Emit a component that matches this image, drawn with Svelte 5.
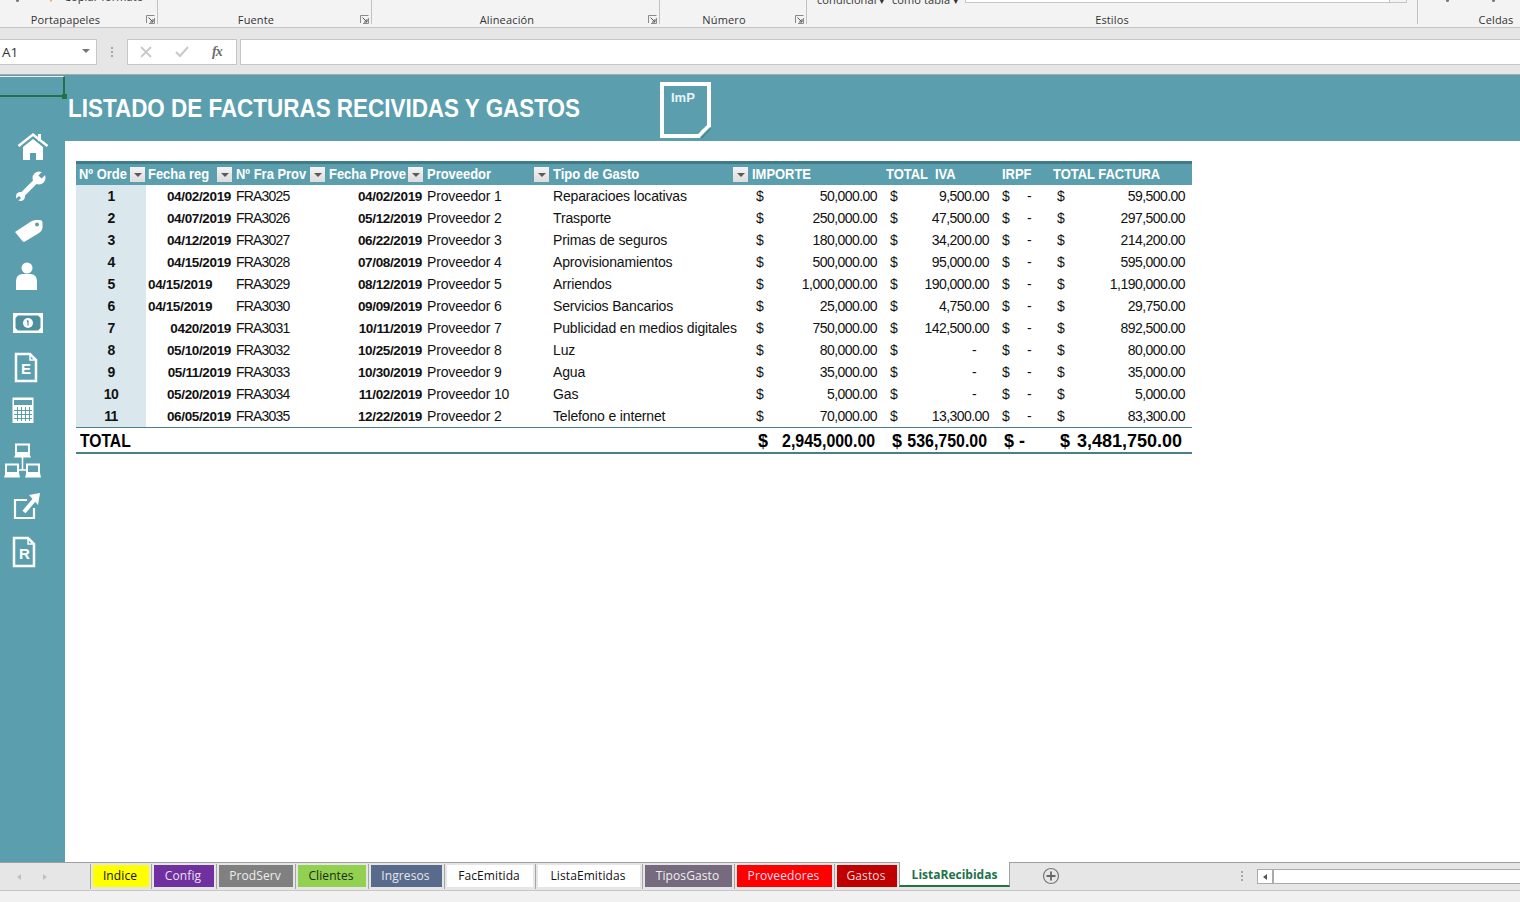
<script>
  const groups = [
    { name: 'Portapapeles', cls: 'g-clip', launcher: true },
    { name: 'Fuente', cls: 'g-font', launcher: true },
    { name: 'Alineación', cls: 'g-align', launcher: true },
    { name: 'Número', cls: 'g-num', launcher: true },
    { name: 'Estilos', cls: 'g-style', launcher: false },
    { name: 'Celdas', cls: 'g-cells', launcher: false },
  ]

  const rows = [
    [1, '04/02/2019', 'FRA3025', '04/02/2019', 'Proveedor 1', 'Reparacioes locativas', '50,000.00', '9,500.00', '59,500.00'],
    [2, '04/07/2019', 'FRA3026', '05/12/2019', 'Proveedor 2', 'Trasporte', '250,000.00', '47,500.00', '297,500.00'],
    [3, '04/12/2019', 'FRA3027', '06/22/2019', 'Proveedor 3', 'Primas de seguros', '180,000.00', '34,200.00', '214,200.00'],
    [4, '04/15/2019', 'FRA3028', '07/08/2019', 'Proveedor 4', 'Aprovisionamientos', '500,000.00', '95,000.00', '595,000.00'],
    [5, '04/15/2019', 'FRA3029', '08/12/2019', 'Proveedor 5', 'Arriendos', '1,000,000.00', '190,000.00', '1,190,000.00'],
    [6, '04/15/2019', 'FRA3030', '09/09/2019', 'Proveedor 6', 'Servicios Bancarios', '25,000.00', '4,750.00', '29,750.00'],
    [7, '0420/2019', 'FRA3031', '10/11/2019', 'Proveedor 7', 'Publicidad en medios digitales', '750,000.00', '142,500.00', '892,500.00'],
    [8, '05/10/2019', 'FRA3032', '10/25/2019', 'Proveedor 8', 'Luz', '80,000.00', '-', '80,000.00'],
    [9, '05/11/2019', 'FRA3033', '10/30/2019', 'Proveedor 9', 'Agua', '35,000.00', '-', '35,000.00'],
    [10, '05/20/2019', 'FRA3034', '11/02/2019', 'Proveedor 10', 'Gas', '5,000.00', '-', '5,000.00'],
    [11, '06/05/2019', 'FRA3035', '12/22/2019', 'Proveedor 2', 'Telefono e internet', '70,000.00', '13,300.00', '83,300.00'],
  ]

  const headers = [
    { label: 'Nº Orde', filter: true },
    { label: 'Fecha reg', filter: true },
    { label: 'Nº Fra Prov', filter: true },
    { label: 'Fecha Prove', filter: true },
    { label: 'Proveedor', filter: true },
    { label: 'Tipo de Gasto', filter: true },
    { label: 'IMPORTE', filter: false },
    { label: 'TOTAL  IVA', filter: false },
    { label: 'IRPF', filter: false },
    { label: 'TOTAL FACTURA', filter: false },
  ]

  const widths = [70, 88, 93, 98, 126, 199, 134, 116, 51, 141]

  const tabs = [
    { name: 'Indice', w: 56, bg: '#ffff00', fg: '#111' },
    { name: 'Config', w: 60, bg: '#7030a0', fg: '#e8e0f0' },
    { name: 'ProdServ', w: 74, bg: '#808080', fg: '#eee' },
    { name: 'Clientes', w: 68, bg: '#92d050', fg: '#1c2c10' },
    { name: 'Ingresos', w: 71, bg: '#596b8c', fg: '#e4e8f0' },
    { name: 'FacEmitida', w: 86, bg: '#ffffff', fg: '#111' },
    { name: 'ListaEmitidas', w: 102, bg: '#ffffff', fg: '#111' },
    { name: 'TiposGasto', w: 87, bg: '#766a7e', fg: '#eee' },
    { name: 'Proveedores', w: 95, bg: '#ff0000', fg: '#fde' },
    { name: 'Gastos', w: 60, bg: '#c00000', fg: '#f6dada' },
  ]
</script>

<div class="window">
  <div class="ribbon">
    {#each groups as g}
      <div class="group {g.cls}">
        <div class="cut">
          {#if g.cls === 'g-clip'}
            <span class="caret-small first"></span>
            <svg class="brush" width="10" height="8" viewBox="0 0 10 8"><path d="M2 0h6L6 6 5 7 4 6z" fill="#e9b671" /></svg>
            <span class="cut-text">Copiar formato</span>
          {:else if g.cls === 'g-style'}
            <span class="cut-text cond">condicional ▾</span>
            <span class="cut-text tabla">como tabla ▾</span>
            <span class="style-box"><i></i></span>
          {:else if g.cls === 'g-cells'}
            <span class="caret-small c1"></span>
            <span class="caret-small c2"></span>
          {/if}
        </div>
        <div class="label">{g.name}</div>
        {#if g.launcher}
          <svg class="launcher" width="9" height="9" viewBox="0 0 9 9">
            <path d="M.5 8V.5H8.5M8.5 3v5.500H3" fill="none" stroke="#8a8a8a" />
            <path d="M2.500 2.500L7 7M7 4v3H4" fill="none" stroke="#555" />
          </svg>
        {/if}
      </div>
    {/each}
  </div>

  <div class="formula">
    <div class="namebox">
      <span>A1</span>
      <i class="tri"></i>
    </div>
    <div class="dots"><b></b><b></b><b></b></div>
    <div class="fx-buttons">
      <svg width="12" height="12" viewBox="0 0 12 12"><path d="M1 1l10 10M11 1L1 11" stroke="#c8c8c8" stroke-width="1.800" /></svg>
      <svg width="14" height="12" viewBox="0 0 14 12"><path d="M1 6l4 4 8-9" fill="none" stroke="#c8c8c8" stroke-width="2" /></svg>
      <span class="fx">fx</span>
    </div>
    <div class="input"></div>
  </div>

  <div class="sheet">
    <div class="selected"><i></i></div>

    <header class="banner">
      <h1>LISTADO DE FACTURAS RECIVIDAS Y GASTOS</h1>
      <svg class="note" width="54" height="60" viewBox="658 80 54 60">
        <path d="M662 84H709V126L699 136H662Z" fill="none" stroke="#fff" stroke-width="4" />
        <path d="M700 137L710 127L711 129L702 139Z" fill="#3f7f8c" opacity=".6" />
        <path d="M699 136Q701 128 709 126Z" fill="#fff" />
        <text x="671" y="102" class="imp">ImP</text>
      </svg>
    </header>

    <div class="body">
      <nav class="rail">
        <svg viewBox="0 122 65 46">
          <path d="M18.500 146L33 134.500 47.500 146" fill="none" stroke="#fff" stroke-width="2.500" />
          <path d="M38 134h3v7h-3z" fill="#fff" />
          <path d="M23 147L33 139l10 8v13h-7v-7h-6v7h-7z" fill="#fff" />
        </svg>
        <svg viewBox="0 168 65 46">
          <path d="M21 196L38 179" stroke="#fff" stroke-width="5" />
          <circle cx="39" cy="178" r="6.500" fill="#fff" />
          <path d="M40 177L47 170" stroke="#5b9faf" stroke-width="4.500" />
          <circle cx="20.500" cy="196.500" r="4.500" fill="#fff" />
          <path d="M20 197L15 202" stroke="#5b9faf" stroke-width="3" />
        </svg>
        <svg viewBox="0 214 65 46">
          <path d="M15 232L31 221.500Q33 220 36 220H40Q42.500 220 42.500 223V228Q42 231 39 233L25 241.500Q23 242.500 22 240.500Z" fill="#fff" />
          <circle cx="37" cy="224.500" r="2" fill="#5b9faf" />
        </svg>
        <svg viewBox="0 260 65 46">
          <circle cx="27" cy="268" r="5.500" fill="#fff" />
          <path d="M16 290V281Q16 275 22 274H31Q37 275 37 281V290Z" fill="#fff" />
        </svg>
        <svg viewBox="0 306 65 46">
          <path d="M13 313H43V333H13Z" fill="#fff" />
          <path d="M18 315.500H38L40.500 318V328L38 330.500H18L15.500 328V318Z" fill="#4d8f9e" />
          <circle cx="28" cy="323" r="5" fill="#fff" />
          <path d="M28 320.500V325.500M26.800 321.500L28 320.500" stroke="#4d8f9e" stroke-width="1.200" fill="none" />
        </svg>
        <svg viewBox="0 352 65 46">
          <path d="M16 354H30L36 360V381H16Z" fill="none" stroke="#fff" stroke-width="2.500" />
          <path d="M30 354V360H36" fill="none" stroke="#fff" stroke-width="1.500" />
          <text x="21" y="374" class="doc">E</text>
        </svg>
        <svg viewBox="0 398 65 46">
          <rect x="12.500" y="397.500" width="21" height="25.500" fill="#fff" />
          <rect x="14" y="400" width="18" height="5" fill="#5b9faf" />
          <path d="M14 410.500H32M14 414.500H32M14 418.500H32M17.500 407V421M21.500 407V421M25.500 407V421M29.500 407V421" stroke="#5b9faf" />
        </svg>
        <svg viewBox="0 444 65 46">
          <path d="M22.500 456V464M19 470H26M22.500 464V470" stroke="#fff" stroke-width="1.500" />
          <path d="M16 444.500H29V453H16Z" fill="none" stroke="#fff" stroke-width="2" />
          <path d="M15.500 454H29.500L31 457.500H14Z" fill="#fff" />
          <path d="M6 464.500H18V473H6Z" fill="none" stroke="#fff" stroke-width="2" />
          <path d="M5.500 473H19L20 477.500H4Z" fill="#fff" />
          <path d="M27 464.500H39V473H27Z" fill="none" stroke="#fff" stroke-width="2" />
          <path d="M26.500 473H40L41 477.500H25Z" fill="#fff" />
        </svg>
        <svg viewBox="0 490 65 46">
          <path d="M27 500H15V518H34V508" fill="none" stroke="#fff" stroke-width="2.200" />
          <path d="M24 512L35 499" stroke="#fff" stroke-width="4" />
          <path d="M29 495L40 493L38 505Z" fill="#fff" />
        </svg>
        <svg viewBox="0 536 65 46">
          <path d="M14 538H28L34 544V566H14Z" fill="none" stroke="#fff" stroke-width="2.500" />
          <path d="M28 538V544H34" fill="none" stroke="#fff" stroke-width="1.500" />
          <text x="19" y="558.500" class="doc">R</text>
        </svg>
      </nav>

      <main class="content">
        <table>
          <colgroup>
            {#each widths as w}<col style={`width: ${w}px`} />{/each}
          </colgroup>
          <thead>
            <tr>
              {#each headers as h}
                <th>
                  <div class="head-cell">
                    <span class="head-label"><span>{h.label}</span></span>
                    {#if h.filter}<span class="filter"><i></i></span>{/if}
                  </div>
                </th>
              {/each}
            </tr>
          </thead>
          <tbody>
            {#each rows as r, i}
              <tr>
                <td class="order">{r[0]}</td>
                <td class="date" class:left={i === 4 || i === 5}>{r[1]}</td>
                <td class="code">{r[2]}</td>
                <td class="date">{r[3]}</td>
                <td class="plain">{r[4]}</td>
                <td class="plain">{r[5]}</td>
                <td class="m-imp"><div class="money"><span>$</span><span>{r[6]}</span></div></td>
                <td class="m-iva"><div class="money"><span>$</span><span class:dash={r[7] === '-'}>{r[7]}</span></div></td>
                <td class="m-irpf"><div class="money"><span>$</span><span>-</span></div></td>
                <td class="m-tot"><div class="money"><span>$</span><span>{r[8]}</span></div></td>
              </tr>
            {/each}
          </tbody>
          <tfoot>
            <tr>
              <td colspan="6" class="total-label"><span>TOTAL</span></td>
              <td class="s-imp"><div class="money"><span>$</span><span class="sum">2,945,000.00</span></div></td>
              <td class="s-iva"><div class="money"><span>$</span><span class="sum">536,750.00</span></div></td>
              <td class="s-irpf">$ -</td>
              <td class="s-tot"><div class="money"><span>$</span><span>3,481,750.00</span></div></td>
            </tr>
          </tfoot>
        </table>
      </main>
    </div>
  </div>

  <div class="tabbar">
    <div class="nav-arrows">
      <i class="arrow-l"></i>
      <i class="arrow-r"></i>
    </div>
    <div class="tabs">
      {#each tabs as t}
        <div class="tab">
          <div class="tab-fill" style={`width: ${t.w}px; background: ${t.bg}; color: ${t.fg}`}>{t.name}</div>
        </div>
      {/each}
      <div class="tab-active">ListaRecibidas</div>
    </div>
    <svg class="add" width="18" height="18" viewBox="0 0 18 18">
      <circle cx="9" cy="9" r="7.500" fill="none" stroke="#777" stroke-width="1.200" />
      <path d="M9 4.500v9M4.500 9h9" stroke="#666" stroke-width="1.800" />
    </svg>
    <div class="dots tab-dots"><b></b><b></b><b></b></div>
    <div class="hscroll">
      <span class="hbtn"><i></i></span>
      <span class="htrack"></span>
    </div>
  </div>
  <div class="status"></div>
</div>

<style>
  :global(body) {
    margin: 0;
    background: #fff;
  }

  .window {
    width: 1520px;
    height: 902px;
    overflow: hidden;
    display: flex;
    flex-direction: column;
    font-family: "Liberation Sans", Arial, sans-serif;
  }

  /* ribbon, scrolled so only the bottom of it shows */
  .ribbon {
    height: 28px;
    box-sizing: border-box;
    flex: none;
    display: flex;
    background: #f3f3f3;
    overflow: hidden;
    border-bottom: 1px solid #c6c6c6;
    font-family: "Open Sans", sans-serif;
    color: #333;
  }

  .group {
    position: relative;
    height: 24px;
    box-sizing: border-box;
    border-right: 1px solid #c2c2c2;
  }

  .g-clip { width: 158px; padding-right: 26px; }
  .g-font { width: 214px; padding-right: 17px; }
  .g-align { width: 288px; padding-right: 17px; }
  .g-num { width: 147px; padding-right: 18px; }
  .g-style { width: 611px; }
  .g-cells { flex: 1; border-right: 0; padding-left: 54px; }

  .cut {
    height: 12px;
    margin-top: -6px;
    font-size: 11px;
    line-height: 12px;
    white-space: nowrap;
    position: relative;
  }

  .cut-text { letter-spacing: .1px; }
  .brush { position: absolute; left: 46px; bottom: 3px; }
  .g-clip .cut-text { position: absolute; left: 64px; bottom: 3px; }
  .cond { position: absolute; left: 10px; bottom: 0; }
  .tabla { position: absolute; left: 85px; bottom: 0; }

  .style-box {
    position: absolute;
    left: 158px;
    right: 10px;
    bottom: 3px;
    height: 8px;
    box-sizing: border-box;
    background: #fff;
    border: 1px solid #c6c6c6;
  }
  .style-box i {
    position: absolute;
    right: 0;
    top: 0;
    bottom: -1px;
    width: 16px;
    background: #f3f3f3;
    border-left: 1px solid #c6c6c6;
    border-bottom: 1px solid #c6c6c6;
  }

  .caret-small {
    position: absolute;
    bottom: 4px;
    width: 3px;
    height: 3px;
    border-radius: 50%;
    background: #777;
  }
  .first { left: 16px; }
  .c1 { left: -26px; }
  .c2 { left: 20px; }

  .label {
    margin-top: 8px;
    font-size: 11px;
    line-height: 12px;
    text-align: center;
    letter-spacing: .15px;
  }

  .launcher {
    position: absolute;
    right: 2px;
    bottom: 0;
  }

  /* formula bar */
  .formula {
    height: 47px;
    flex: none;
    box-sizing: border-box;
    background: #e6e6e6;
    padding-top: 11px;
    display: flex;
    align-items: flex-start;
    border-bottom: 1px solid #a9a9a9;
  }

  .namebox,
  .fx-buttons,
  .input {
    height: 26px;
    box-sizing: border-box;
    background: #fff;
    border: 1px solid #c6c6c6;
  }

  .namebox {
    width: 97px;
    border-left: 0;
    display: flex;
    align-items: center;
    justify-content: space-between;
    padding: 0 6px 0 2px;
    font-family: "Open Sans", sans-serif;
    font-size: 13.500px;
    color: #333;
  }

  .tri {
    width: 0;
    height: 0;
    border-left: 4px solid transparent;
    border-right: 4px solid transparent;
    border-top: 4px solid #777;
    margin-bottom: 2px;
  }

  .dots {
    display: flex;
    flex-direction: column;
    gap: 2px;
    width: 2px;
  }
  .dots b {
    width: 2px;
    height: 2px;
    background: #a8a8a8;
  }
  .formula .dots {
    margin: 8px 14px 0 14px;
  }

  .fx-buttons {
    width: 110px;
    display: flex;
    align-items: center;
    gap: 23px;
    padding-left: 12px;
    margin-right: 3px;
  }

  .fx {
    font-family: "Liberation Serif", serif;
    font-style: italic;
    font-weight: bold;
    font-size: 14px;
    color: #6d6d6d;
    letter-spacing: -1px;
  }

  .input {
    flex: 1;
    border-right: 0;
  }

  /* sheet */
  .sheet {
    position: relative;
    height: 787px;
    flex: none;
    display: flex;
    flex-direction: column;
    background: #fff;
  }

  .selected {
    position: absolute;
    left: -2px;
    top: 1px;
    width: 67px;
    height: 21px;
    box-sizing: border-box;
    border: 1px solid #e6f0f0;
    border-bottom: 2px solid #217346;
    border-right: 2px solid #217346;
  }
  .selected i {
    position: absolute;
    right: -4px;
    bottom: -4px;
    width: 5px;
    height: 5px;
    background: #217346;
  }

  .banner {
    height: 66px;
    flex: none;
    display: flex;
    align-items: flex-start;
    background: #5b9faf;
    padding-left: 68px;
  }

  /* Arial Narrow in the original: no such font here, so squeeze */
  h1 {
    margin: 17px 0 0;
    width: 590px;
    font-size: 26px;
    line-height: 32px;
    font-weight: bold;
    color: #fff;
    white-space: nowrap;
    transform: scaleX(.863);
    transform-origin: left center;
  }

  .note {
    margin-top: 5px;
  }
  .imp {
    font-family: "Liberation Sans", sans-serif;
    font-weight: bold;
    font-size: 13px;
    fill: #e9f3f5;
  }

  .body {
    flex: 1;
    display: flex;
    min-height: 0;
  }

  .rail {
    width: 65px;
    flex: none;
    background: #5b9faf;
    display: flex;
    flex-direction: column;
  }

  .rail svg {
    width: 65px;
    height: 46px;
    flex: none;
    overflow: visible;
    position: relative;
    top: -19px;
  }

  .doc {
    font-family: "Liberation Sans", sans-serif;
    font-weight: bold;
    font-size: 15px;
    fill: #fff;
  }

  .content {
    padding: 20px 0 0 11px;
  }

  table {
    width: 1116px;
    table-layout: fixed;
    border-collapse: separate;
    border-spacing: 0;
    color: #111;
    font-size: 14px;
    letter-spacing: -.55px;
  }

  th {
    height: 24px;
    padding: 0;
    box-sizing: border-box;
    background: #5b9faf;
    border-top: 3px solid #3f7c8a;
    text-align: left;
    color: #fff;
    font-size: 14px;
    letter-spacing: 0;
  }

  .head-cell {
    display: flex;
    align-items: center;
    justify-content: space-between;
    padding: 0 2px 0 2px;
    height: 21px;
  }
  th:first-child .head-cell {
    padding: 0 1px 0 3px;
  }

  .head-label {
    white-space: pre;
    overflow: hidden;
    min-width: 0;
    flex: 1;
    line-height: 21px;
  }
  .head-label span {
    display: inline-block;
    transform: scaleX(.925);
    transform-origin: left center;
  }

  .filter {
    flex: none;
    width: 15px;
    height: 15px;
    background: linear-gradient(#f4f4f4, #dcdcdc);
    display: flex;
    align-items: center;
    justify-content: center;
  }
  .filter i {
    width: 0;
    height: 0;
    border-left: 4px solid transparent;
    border-right: 4px solid transparent;
    border-top: 4px solid #5a5a5a;
  }

  td {
    height: 22px;
    padding: 0 2px;
    white-space: nowrap;
    box-sizing: border-box;
  }

  .order {
    background: #dae8ee;
    text-align: center;
    font-weight: bold;
  }

  .date {
    text-align: right;
    font-weight: bold;
    font-size: 13.500px;
    letter-spacing: -.35px;
    padding-right: 3px;
  }
  .date.left {
    text-align: left;
    padding-left: 2px;
  }

  .code {
    letter-spacing: -.8px;
  }

  .plain {
    letter-spacing: -.15px;
  }

  .money {
    display: flex;
    justify-content: space-between;
  }
  .dash { padding-right: 13px; }

  .m-imp { padding: 0 7px 0 6px; }
  .m-iva { padding: 0 11px 0 6px; }
  .m-irpf { padding: 0 20px 0 2px; }
  .m-tot { padding: 0 7px 0 6px; }

  tfoot td {
    height: 27px;
    padding-top: 2px;
    border-top: 1px solid #4a7f87;
    border-bottom: 2px solid #4a7f87;
    font-weight: bold;
    font-size: 18px;
    letter-spacing: 0;
    color: #000;
  }

  .total-label { padding-left: 4px; }
  .total-label span {
    display: inline-block;
    transform: scaleX(.87);
    transform-origin: left center;
  }
  .sum {
    display: inline-block;
    margin-left: -14px;
    transform: scaleX(.885);
    transform-origin: right center;
  }
  .s-imp { padding: 2px 9px 0 8px; }
  .s-iva { padding: 2px 13px 0 8px; }
  .s-irpf { padding: 2px 0 0 4px; }
  .s-tot { padding: 2px 10px 0 9px; }

  /* sheet tabs */
  .tabbar {
    height: 29px;
    flex: none;
    box-sizing: border-box;
    display: flex;
    align-items: flex-start;
    background: #e6e6e6;
    border-top: 1px solid #a0a0a0;
    border-bottom: 1px solid #c6c6c6;
    font-family: "Open Sans", sans-serif;
    font-size: 12px;
  }

  .nav-arrows {
    width: 90px;
    flex: none;
    height: 27px;
    display: flex;
    align-items: center;
    gap: 22px;
    padding-left: 17px;
    box-sizing: border-box;
  }
  .arrow-l,
  .arrow-r {
    width: 0;
    height: 0;
    border-top: 3px solid transparent;
    border-bottom: 3px solid transparent;
  }
  .arrow-l { border-right: 4px solid #c0c0c0; }
  .arrow-r { border-left: 4px solid #c0c0c0; }

  .tabs {
    display: flex;
    width: 922px;
    flex: none;
    align-items: flex-start;
  }

  .tab {
    margin-top: 1px;
    height: 25px;
    box-sizing: border-box;
    border-left: 1px solid #a6a6a6;
    padding: 1px 2px 0 2px;
  }

  .tab-fill {
    height: 22px;
    box-sizing: border-box;
    padding: 0 2px 2px 0;
    display: flex;
    align-items: center;
    justify-content: center;
    letter-spacing: .1px;
  }

  .tab-active {
    width: 111px;
    height: 25px;
    box-sizing: border-box;
    background: #fff;
    margin-top: -1px;
    padding-top: 2px;
    border-left: 1px solid #a0a0a0;
    border-right: 1px solid #a0a0a0;
    border-bottom: 2px solid #217346;
    color: #217346;
    font-weight: bold;
    display: flex;
    align-items: center;
    justify-content: center;
  }

  .add {
    margin: 4px 0 0 30px;
    flex: none;
  }

  .tab-dots {
    margin: 8px 0 0 181px;
    flex: none;
  }

  .hscroll {
    margin: 6px 0 0 14px;
    flex: 1;
    display: flex;
    height: 15px;
    box-sizing: border-box;
    background: #fff;
    border: 1px solid #ababab;
    border-right: 0;
  }
  .hbtn {
    width: 14px;
    display: flex;
    align-items: center;
    justify-content: center;
    border-right: 2px solid #ababab;
  }
  .hbtn i {
    width: 0;
    height: 0;
    border-top: 3px solid transparent;
    border-bottom: 3px solid transparent;
    border-right: 4px solid #555;
  }
  .htrack { flex: 1; }

  .status {
    flex: 1;
    background: #f1f1f1;
  }
</style>
